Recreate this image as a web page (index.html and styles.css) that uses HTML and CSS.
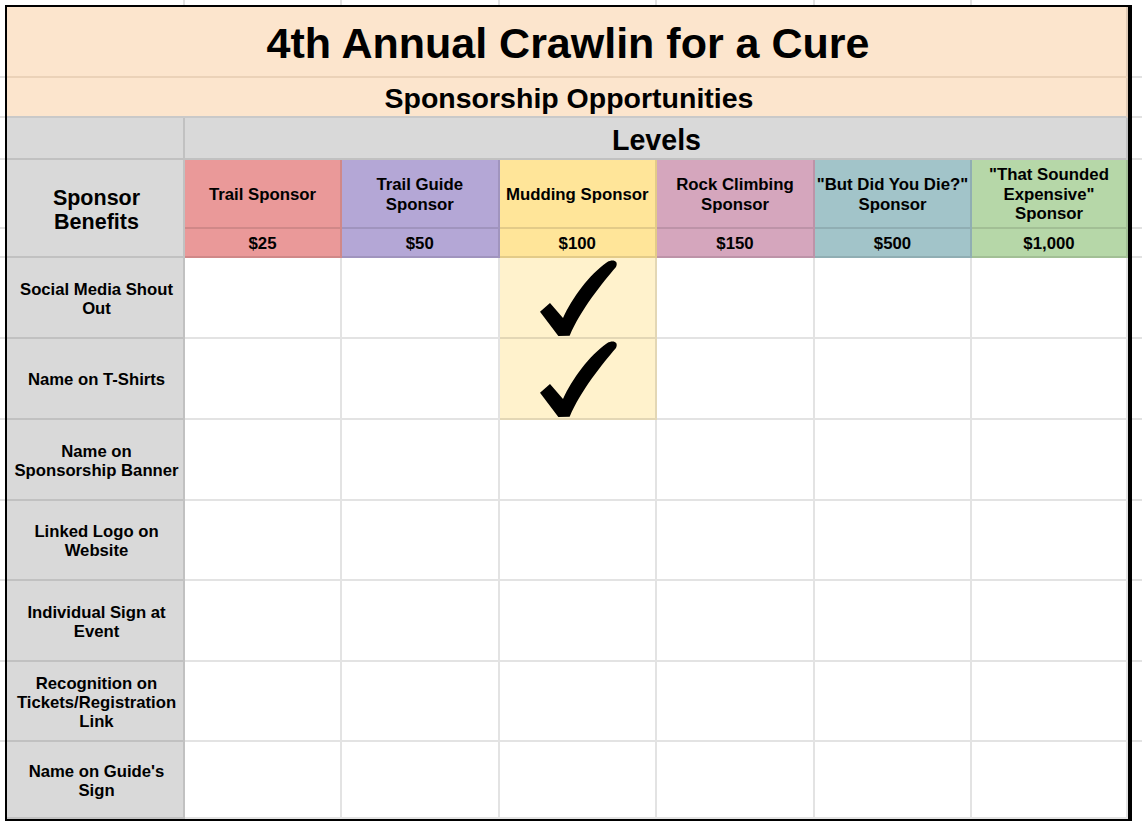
FILE: index.html
```html
<!DOCTYPE html>
<html lang="en">
<head>
<meta charset="utf-8">
<title>4th Annual Crawlin for a Cure – Sponsorship Opportunities</title>
<link rel="stylesheet" href="styles.css">
</head>
<body>
<div class="page">
  <div class="frame">
    <div class="c title">4th Annual Crawlin for a Cure</div>
    <div class="c subtitle">Sponsorship Opportunities</div>

    <div class="c gray"></div>
    <div class="c gray levels">Levels</div>

    <div class="c gray benefits">Sponsor<br>Benefits</div>
    <div class="c head red">Trail Sponsor</div>
    <div class="c head purple">Trail Guide Sponsor</div>
    <div class="c head yellow">Mudding Sponsor</div>
    <div class="c head magenta">Rock Climbing Sponsor</div>
    <div class="c head cyan">"But Did You Die?" Sponsor</div>
    <div class="c head green">"That Sounded Expensive" Sponsor</div>

    <div class="c price red">$25</div>
    <div class="c price purple">$50</div>
    <div class="c price yellow">$100</div>
    <div class="c price magenta">$150</div>
    <div class="c price cyan">$500</div>
    <div class="c price green">$1,000</div>

    <div class="c label">Social Media Shout Out</div>
    <div class="c"></div><div class="c"></div>
    <div class="c yes"><svg class="check" viewBox="180 28 240 234" width="80" height="78" aria-label="check"><path d="M183,186 L213,160 L252,205 C280,145 330,75 385,37 C400,28 420,32 411,52 C370,100 305,180 272,258 L238,259 Z"/></svg></div>
    <div class="c"></div><div class="c"></div><div class="c"></div>

    <div class="c label">Name on T-Shirts</div>
    <div class="c"></div><div class="c"></div>
    <div class="c yes"><svg class="check" viewBox="180 28 240 234" width="80" height="78" aria-label="check"><path d="M183,186 L213,160 L252,205 C280,145 330,75 385,37 C400,28 420,32 411,52 C370,100 305,180 272,258 L238,259 Z"/></svg></div>
    <div class="c"></div><div class="c"></div><div class="c"></div>

    <div class="c label">Name on Sponsorship Banner</div>
    <div class="c"></div><div class="c"></div><div class="c"></div><div class="c"></div><div class="c"></div><div class="c"></div>

    <div class="c label">Linked Logo on Website</div>
    <div class="c"></div><div class="c"></div><div class="c"></div><div class="c"></div><div class="c"></div><div class="c"></div>

    <div class="c label">Individual Sign at Event</div>
    <div class="c"></div><div class="c"></div><div class="c"></div><div class="c"></div><div class="c"></div><div class="c"></div>

    <div class="c label">Recognition on Tickets/Registration Link</div>
    <div class="c"></div><div class="c"></div><div class="c"></div><div class="c"></div><div class="c"></div><div class="c"></div>

    <div class="c label">Name on Guide's Sign</div>
    <div class="c"></div><div class="c"></div><div class="c"></div><div class="c"></div><div class="c"></div><div class="c"></div>
  </div>
</div>
</body>
</html>
```
FILE: styles.css
```css
* { box-sizing: border-box; }
html, body { margin: 0; padding: 0; }
body {
  font-family: "Liberation Sans", Arial, sans-serif;
  font-weight: bold;
  color: #000;
  background: #fff;
}
.page {
  width: 1142px;
  height: 821px;
  overflow: hidden;
  padding: 5px 0 0 5px;
  --g: linear-gradient(#e2e2e2, #e2e2e2);
  background:
    var(--g) 0 76px / 100% 2px no-repeat,
    var(--g) 0 116px / 100% 2px no-repeat,
    var(--g) 0 158px / 100% 2px no-repeat,
    var(--g) 0 227px / 100% 2px no-repeat,
    var(--g) 0 256px / 100% 2px no-repeat,
    var(--g) 0 337px / 100% 2px no-repeat,
    var(--g) 0 418px / 100% 2px no-repeat,
    var(--g) 0 499px / 100% 2px no-repeat,
    var(--g) 0 579px / 100% 2px no-repeat,
    var(--g) 0 660px / 100% 2px no-repeat,
    var(--g) 0 740px / 100% 2px no-repeat,
    var(--g) 183px 0 / 2px 100% no-repeat,
    var(--g) 340px 0 / 2px 100% no-repeat,
    var(--g) 498px 0 / 2px 100% no-repeat,
    var(--g) 655px 0 / 2px 100% no-repeat,
    var(--g) 813px 0 / 2px 100% no-repeat,
    var(--g) 970px 0 / 2px 100% no-repeat,
    #fff;
}
.frame {
  width: 1127px;
  height: 816px;
  border: 2px solid #000;
  border-right-width: 4px;
  background: #fff;
  display: grid;
  grid-template-columns: 178px 157px 157.5px 157.5px 158px 157px 156px;
  grid-template-rows: 71px 40px 42px 69px 29px 81px 81px 81px 80px 81px 80px 77px;
}
.c {
  border-right: 2px solid rgba(0, 0, 0, 0.11);
  border-bottom: 2px solid rgba(0, 0, 0, 0.11);
  display: flex;
  align-items: center;
  justify-content: center;
  text-align: center;
  padding: 2px 3px 0;
  background: #fff;
  min-width: 0;
}
.title {
  grid-column: 1 / -1;
  background: #fce5cd;
  font-size: 43px;
  border-bottom-color: rgba(120, 80, 40, 0.12);
  padding: 4px 0 0 3px;
}
.subtitle {
  grid-column: 1 / -1;
  background: #fce5cd;
  font-size: 28.5px;
  border-bottom-color: #c9c9c9;
  padding: 3px 0 0 5px;
}
.gray { background: #d9d9d9; }
.levels {
  grid-column: span 6;
  font-size: 28.6px;
  padding-top: 4px;
  padding-left: 4px;
  padding-right: 2px;
}
.benefits {
  grid-row: span 2;
  font-size: 21.5px;
  line-height: 24px;
  padding: 4px 1px 0 4px;
}
.head, .price {
  font-size: 16.8px;
  line-height: 19.5px;
  padding-left: 0;
  padding-right: 0;
}
.label {
  background: #d9d9d9;
  font-size: 16.7px;
  line-height: 19px;
  padding-left: 4.5px;
  padding-right: 1.5px;
}
.red { background: #ea9999; }
.purple { background: #b4a7d6; }
.yellow { background: #ffe599; }
.magenta { background: #d5a6bd; }
.cyan { background: #a2c4c9; }
.green { background: #b6d7a8; }
.yes { background: #fff2cc; padding: 0; }
.check { display: block; fill: #000; margin-left: 3px; margin-top: 1px; }
```
